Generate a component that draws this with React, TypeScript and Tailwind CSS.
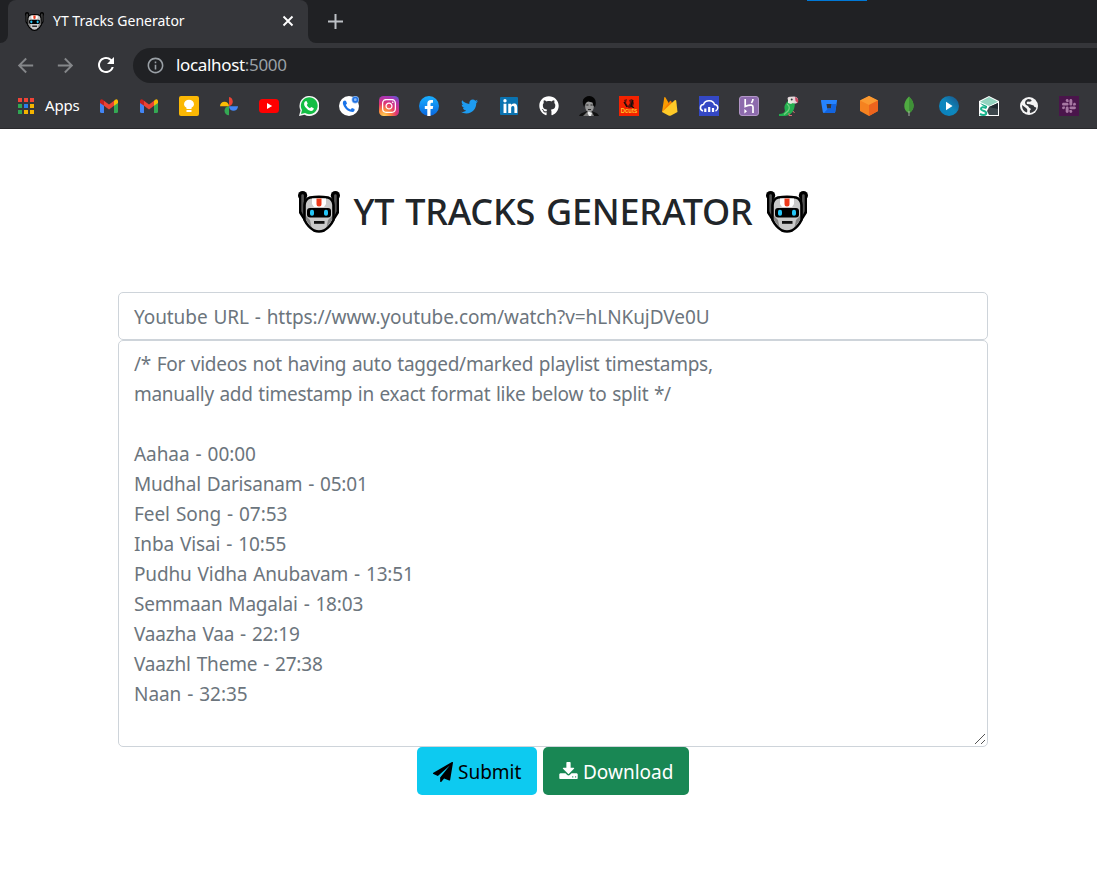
import type { ReactNode } from "react";
import { FaInstagram, FaTwitter, FaGithub, FaLinkedinIn, FaSlack } from "react-icons/fa";
import { MdArrowBack, MdArrowForward, MdRefresh, MdInfoOutline } from "react-icons/md";

function Robot({ className }: { className: string }) {
  return (
    <svg viewBox="0 0 42 42" className={className}>
      <path d="M4.200 4.600V21L8 27M37.800 4.600V21L34 27" stroke="#000" strokeWidth="6.400" strokeLinecap="round" fill="none" />
      <circle cx="4.600" cy="4.600" r="4.600" fill="#000" />
      <circle cx="37.400" cy="4.600" r="4.600" fill="#000" />
      <path d="M4.600 4.500V20L7 25M37.400 4.500V20L35 25" stroke="#555" strokeWidth="2.600" strokeLinecap="round" fill="none" />
      <path d="M12 6.500Q21 5 30 6.500Q35 8 35.500 14V29Q32 36 26 39.500Q21 41.500 16 39.500Q10 36 6.500 29V14Q7 8 12 6.500Z" fill="#c9c9c9" stroke="#000" strokeWidth="2.600" />
      <path d="M8 25L12 29L13.500 36.500L8 29ZM34 25L30 29L28.500 36.500L34 29Z" fill="#858585" />
      <path d="M14 7.500H28V13L26 16H16L14 13Z" fill="#fff" />
      <path d="M18.500 7.500H23.500V13Q23.500 15.500 21 15.500Q18.500 15.500 18.500 13Z" fill="#ee3a1b" />
      <rect x="9" y="17" width="24" height="9.500" rx="3" fill="#000" />
      <rect x="12" y="18.800" width="4" height="6" rx="1.800" fill="#25c6f7" />
      <rect x="26" y="18.800" width="4" height="6" rx="1.800" fill="#25c6f7" />
      <rect x="16" y="30" width="10.500" height="2.800" fill="#111" />
    </svg>
  );
}

function PaperPlane() {
  return (
    <svg viewBox="0 0 1792 1792" className="mr-[5px] size-5" fill="currentColor">
      <path d="M1764 11q33 24 27 64l-256 1536q-5 29-32 45-14 8-31 8-11 0-24-5l-453-185-242 295q-18 23-49 23-13 0-22-4-19-7-30.5-23.5t-11.5-36.5v-349l864-1059-1069 925-395-162q-37-14-40-55-2-40 32-59l1664-960q15-9 32-9 20 0 36 11z" />
    </svg>
  );
}

function DownloadTray() {
  return (
    <svg viewBox="64 0 1664 1536" className="mr-[5px] mb-[4px] h-[17px] w-[19px]" fill="currentColor">
      <path d="M1344 1344q0-26-19-45t-45-19-45 19-19 45 19 45 45 19 45-19 19-45zm256 0q0-26-19-45t-45-19-45 19-19 45 19 45 45 19 45-19 19-45zm128-224v320q0 40-28 68t-68 28h-1472q-40 0-68-28t-28-68v-320q0-40 28-68t68-28h465l135 136q58 56 136 56t136-56l136-136h464q40 0 68 28t28 68zm-325-569q17 41-14 70l-448 448q-18 19-45 19t-45-19l-448-448q-31-29-14-70 17-39 59-39h256v-448q0-26 19-45t45-19h256q26 0 45 19t19 45v448h256q42 0 59 39z" />
    </svg>
  );
}

function Icon({ children }: { children: ReactNode }) {
  return <svg viewBox="0 0 20 20" className="size-5">{children}</svg>;
}

function Gmail() {
  return (
    <Icon>
      <path d="M1 5V15.500Q1 17 2.500 17H5V8.500Z" fill="#4285f4" />
      <path d="M15 8.500V17H17.500Q19 17 19 15.500V5Z" fill="#34a853" />
      <path d="M5 4.800L10 8.600L15 4.800V9.800L10 13.600L5 9.800Z" fill="#ea4335" />
      <path d="M1 5Q1.500 2 4 3.800L5 4.800V9.800L1 7Z" fill="#c5221f" />
      <path d="M19 5Q18.500 2 16 3.800L15 4.800V9.800L19 7Z" fill="#fbbc04" />
    </Icon>
  );
}

const bookmarks: ReactNode[] = [
  <Gmail />,
  <Gmail />,
  <Icon>
    <rect width="20" height="20" rx="2" fill="#fbb804" />
    <path d="M7.500 13V11.700Q5 10.500 5 8.500A5 4.800 0 0 1 15 8.500Q15 10.500 12.500 11.700V13ZM7.500 14H12.500V16H7.500Z" fill="#fff" />
  </Icon>,
  <Icon>
    <path d="M10 1A4.700 4.700 0 0 1 10 10.200Z" fill="#ea4335" />
    <path d="M19 10.200A4.500 4.500 0 0 1 10 10.200Z" fill="#4285f4" />
    <path d="M10 19.200A4.500 4.500 0 0 1 10 10.200Z" fill="#34a853" />
    <path d="M1 10.200A4.500 4.500 0 0 1 10 10.200Z" fill="#fbbc04" />
  </Icon>,
  <Icon>
    <rect y="3" width="20" height="14" rx="3.500" fill="#f00" />
    <path d="M8 7L13.200 10L8 13Z" fill="#fff" />
  </Icon>,
  <Icon>
    <path d="M0 20L1.500 14.500A10 10 0 1 1 5.500 18.700Z" fill="#f5f5f5" />
    <path d="M2 18L3 14A8.400 8.400 0 1 1 6 17Z" fill="#13bd43" />
    <path d="M6 5.500Q7.500 4.300 8 6L8.700 7.800L7.700 9Q8.800 11.200 11 12.200L12.200 11L14.800 12.300Q14.500 15 12 15Q8.800 14.600 6.200 11Q4 7.700 6 5.500Z" fill="#fff" />
  </Icon>,
  <Icon>
    <circle cx="10" cy="10" r="10" fill="#fff" />
    <path d="M4.500 5Q6 4 7 5L8 7.500L6.800 9Q8 12 11.500 13.500L13 12L15.500 13Q16 15.500 13.500 16Q8 15.500 5 10.500Q3 7 4.500 5Z" fill="#1a73e8" />
    <circle cx="16.300" cy="3.700" r="3.700" fill="#8ebcf5" />
    <circle cx="16.300" cy="3.700" r="2.200" fill="none" stroke="#2272e2" strokeWidth="1.600" />
  </Icon>,
  <Icon>
    <defs>
      <radialGradient id="insta" cx=".25" cy="1" r="1.150">
        <stop offset="0" stopColor="#ffd35a" /><stop offset=".28" stopColor="#fb893c" /><stop offset=".55" stopColor="#e13572" /><stop offset=".85" stopColor="#a936b5" /><stop offset="1" stopColor="#6756cf" />
      </radialGradient>
    </defs>
    <rect width="20" height="20" rx="4.500" fill="url(#insta)" />
    <FaInstagram x="2" y="2" width="16" height="16" color="#fff" />
  </Icon>,
  <Icon>
    <defs><linearGradient id="fb" x2="0" y2="1"><stop stopColor="#19afff" /><stop offset="1" stopColor="#0866df" /></linearGradient></defs>
    <circle cx="10" cy="10" r="10" fill="url(#fb)" />
    <path d="M8.300 20V13H5.800V10H8.300V7.700Q8.300 4 12 4H14V6.700H12.700Q11.500 6.700 11.500 8V10H14.200L13.700 13H11.500V20Z" fill="#fff" />
  </Icon>,
  <FaTwitter className="size-[17px] text-[#1d9bf0]" />,
  <Icon>
    <rect x="1" y="1" width="18" height="18" rx="1" fill="#0a73b1" />
    <FaLinkedinIn x="3.300" y="3" width="13.500" height="13.500" color="#fff" />
  </Icon>,
  <FaGithub className="size-5 text-white" />,
  <Icon>
    <path d="M0 20Q1 17 6 16L10 14L15 16Q19 17 20 20Z" fill="#111" />
    <path d="M4 20L8 16H13L15 20Z" fill="#777" />
    <ellipse cx="10.500" cy="10.500" rx="4.300" ry="6" fill="#969696" />
    <path d="M5 11Q2 4 6 1.500Q11-1.500 15 2Q18 5 16 11L14.500 10L13.500 6.500L9 5.500L6.500 7Z" fill="#050505" />
    <path d="M7.300 9H9.500M11.500 9H13.700M9 13.500H12" stroke="#272727" />
    <path d="M9.500 15.500L8.500 17L10 20H12L13 17Z" fill="#eee" />
  </Icon>,
  <Icon>
    <rect width="20" height="20" fill="#f42200" />
    <path d="M5 4L8 3L7 7L9 10L11 7L10 4L13 3L15 7L14 11L10 12L7 10Z" fill="#65100a" />
    <path d="M5 6L8 11M14 4L12 10L15 12" stroke="#14100b" strokeWidth="1.300" fill="none" />
    <text x="1.800" y="16.600" textLength="16.400" lengthAdjust="spacingAndGlyphs" fontFamily="Liberation Sans" fontWeight="700" fontSize="7" fill="#ffc329">Dcuts</text>
  </Icon>,
  <Icon>
    <path d="M3 16L5.300 1.200Q6 .500 6.500 1.500L12 11L4 16Z" fill="#f99b00" />
    <path d="M3 16L11 5Q12 4 12.500 6L16 12Z" fill="#f57c00" />
    <path d="M3 16L16 4Q17 3.700 17.300 5L18.500 16L12 19.400Q10.800 20 9.500 19.400Z" fill="#ffca28" />
  </Icon>,
  <Icon>
    <rect width="20" height="20" fill="#3448c5" />
    <path d="M4 15Q1 14 1.500 11Q2 8.500 4.500 8.500Q6 4.500 10.500 4.800Q14.500 5 15.500 8.500Q19 9 18.800 12Q18.600 14 16.500 15" fill="none" stroke="#fff" strokeWidth="1.500" />
    <path d="M6.300 16V12.500M10.200 16V11M14 16V12" stroke="#fff" strokeWidth="2.200" />
  </Icon>,
  <Icon>
    <rect x=".5" y=".5" width="19" height="19" rx="2.500" fill="#8d6bad" stroke="#b295c7" />
    <path d="M6.200 3V10.500Q10 9 12.200 9.200Q14 9.500 14 11V17M14 3Q13.900 5 12.400 7" fill="none" stroke="#fff" strokeWidth="1.700" />
    <path d="M5.400 13L8 15.200L5.400 17.400Z" fill="#fff" />
  </Icon>,
  <Icon>
    <path d="M9 5Q4 9 6 15Q5 18 0 18V20H6Q13 19 15 13Q17 7 14 4Z" fill="#23af4f" />
    <path d="M9 4Q7.500 1 11 .700L15 .500Q20 1 19 6L17 7.500Q12 8 9 4Z" fill="#e5d3da" />
    <path d="M9 3L13 1L15 6L12 8L9 7Z" fill="#e6e7dd" />
    <path d="M16 1Q20 2 19 7L16.500 5Z" fill="#c9455f" />
    <circle cx="12.700" cy="3.500" r="1" fill="#34313a" />
    <path d="M8 8Q12 11 9 15L5 18.500" stroke="#72cd7d" strokeWidth="1.300" fill="none" />
    <path d="M10 17V19.500H13M14 15L15.500 17" stroke="#d66b70" fill="none" />
  </Icon>,
  <Icon>
    <path d="M2.200 4H17.800Q18.200 4 18 5L16.200 16Q16 17 15 17H5Q4 17 3.800 16L2 5Q2 4 2.200 4ZM7.500 8L8.200 12.500H12L12.700 8Z" fillRule="evenodd" fill="#2684ff" />
    <path d="M12.700 8H17.500L16.200 16Q16 17 15 17H5L9 12.500H12Z" fill="#1264df" />
  </Icon>,
  <Icon>
    <path d="M10 0L19 4.500V15L10 20L1 15V4.500Z" fill="#f58220" />
    <path d="M10 0L19 4.500L10 9L1 4.500Z" fill="#fa9a31" />
    <path d="M10 9L19 4.500V15L10 20Z" fill="#ed641d" />
  </Icon>,
  <Icon>
    <path d="M10 .500Q5 5 5.300 10.500Q5.500 14.500 9.500 17H10.500Q14.500 14 14.700 9.500Q14 4 10 .500Z" fill="#4faa41" />
    <path d="M10 .500V17H10.500Q14.500 14 14.700 9.500Q14 4 10 .500Z" fill="#3f9137" />
    <path d="M10 15V20" stroke="#a5aca2" />
  </Icon>,
  <Icon>
    <defs><linearGradient id="play" x1="0" y1="1" x2="1" y2="0"><stop stopColor="#087fbe" /><stop offset=".5" stopColor="#0e88bd" /><stop offset="1" stopColor="#1b5185" /></linearGradient></defs>
    <circle cx="10" cy="10" r="10" fill="url(#play)" />
    <path d="M7 5.700L13.500 10L7 14.300Z" fill="#fff" />
  </Icon>,
  <Icon>
    <path d="M10 0L20 5V20H0V5Z" fill="#fff" />
    <path d="M10 1L19 5.800L10 10L1 5.800Z" fill="#92d3bf" />
    <path d="M19 7V19H10L8 15L10 11Z" fill="#3d474c" />
    <path d="M10 11L19 7V13Z" fill="#202a30" />
    <path d="M1 7L8 10V12L3 9Z" fill="#16a986" />
    <path d="M7.500 12Q2 10 2 13Q2 14 5 15Q8 16 7 18Q5 20 1 18" stroke="#18b38c" strokeWidth="2" fill="none" />
  </Icon>,
  <Icon>
    <circle cx="10" cy="10" r="9" fill="#f4f4f4" />
    <path d="M9 3Q13 3 12.500 5Q11 6 9 5.500Q7 6 8 8Q11 8 13 9Q15 9 15.500 11Q18 11 17 13Q15.500 16 11 17Q10 14.500 12 13Q10 12 9 10Q6 9 6 7Q6 4 9 3ZM3 9L7 12Q9 13 8 16.500Q3 15 3 9Z" fill="#34363a" />
  </Icon>,
  <Icon>
    <rect width="20" height="20" fill="#4a154b" />
    <FaSlack x="2" y="2" width="16" height="16" color="#a778a3" />
  </Icon>,
];

const appColors = ["bg-[#f04437]", "bg-[#f04437]", "bg-[#f04437]", "bg-[#30a653]", "bg-[#2b7de9]", "bg-[#f4b400]", "bg-[#30a653]", "bg-[#f4b400]", "bg-[#f4b400]"];

const sentence = "tracking-[-0.26px] [word-spacing:1px]";
const track = "tracking-[-0.06px] [word-spacing:1.1px]";
const longTrack = "tracking-[-0.18px] [word-spacing:1.1px]";

const lines: { text: string; spacing: string }[] = [
  { text: "/* For videos not having auto tagged/marked playlist timestamps,", spacing: sentence },
  { text: "manually add timestamp in exact format like below to split */", spacing: "tracking-[-0.28px] [word-spacing:1px]" },
  { text: "", spacing: track },
  { text: "Aahaa - 00:00", spacing: track },
  { text: "Mudhal Darisanam - 05:01", spacing: longTrack },
  { text: "Feel Song - 07:53", spacing: track },
  { text: "Inba Visai - 10:55", spacing: "tracking-[-0.12px] [word-spacing:1.1px]" },
  { text: "Pudhu Vidha Anubavam - 13:51", spacing: "tracking-[-0.14px] [word-spacing:1.1px]" },
  { text: "Semmaan Magalai - 18:03", spacing: longTrack },
  { text: "Vaazha Vaa - 22:19", spacing: longTrack },
  { text: "Vaazhl Theme - 27:38", spacing: longTrack },
  { text: "Naan - 32:35", spacing: track },
];

export default function App() {
  return (
    <div className="h-[877px] w-[1097px] overflow-hidden bg-white font-['Noto_Sans',sans-serif]">
      <header className="bg-[#35363a] text-white">
        <div className="relative flex h-[43px] bg-[#202124]">
          <div className="flex w-2 bg-[#35363a]"><div className="w-2 rounded-br-lg bg-[#202124]" /></div>
          <div className="flex w-[300px] items-center rounded-t-lg bg-[#35363a] pr-[14px] pb-px pl-[17px]">
            <Robot className="size-[19px]" />
            <span className="mb-px ml-[9px] text-[14px] whitespace-nowrap">YT Tracks Generator</span>
            <svg viewBox="0 0 12 12" className="ml-auto size-3"><path d="M1.500 1.500L10.500 10.500M10.500 1.500L1.500 10.500" stroke="#fff" strokeWidth="1.900" /></svg>
          </div>
          <div className="flex flex-1 bg-[#35363a]">
            <div className="flex flex-1 items-center rounded-bl-lg bg-[#202124] pb-px pl-5"><svg viewBox="0 0 15 15" className="size-[15px]"><path d="M7.500 0V15M0 7.500H15" stroke="#bdc1c6" strokeWidth="2" /></svg></div>
          </div>
          <div className="absolute top-0 left-[807px] h-px w-[60px] bg-[#0078d7]" />
        </div>
        <div className="flex h-[45px] items-center pb-px pl-[14px]">
          <MdArrowBack className="size-[23px] text-[#85878a]" />
          <MdArrowForward className="ml-[17px] size-[23px] text-[#85878a]" />
          <MdRefresh className="ml-[17px] size-[24px]" />
          <div className="ml-[15px] flex h-[35px] flex-1 items-center rounded-l-full bg-[#202124] pl-[13px]">
            <MdInfoOutline className="size-[19px] text-[#9aa0a6]" />
            <span className="ml-[11px] text-[17px] tracking-[-0.33px]">localhost<span className="text-[#9aa0a6]">:5000</span></span>
          </div>
        </div>
        <div className="flex h-[41px] items-center border-b border-[#29292c] pb-[4px] pl-[18px]">
          <div className="grid grid-cols-3 gap-[2px]">
            {appColors.map((color, i) => <div key={i} className={"size-[4px] " + color} />)}
          </div>
          <span className="mb-px ml-[11px] w-[54px] text-[15px] tracking-[-0.2px]">Apps</span>
          <div className="flex gap-5">
            {bookmarks.map((icon, i) => <div key={i} className="flex size-5 shrink-0 items-center justify-center">{icon}</div>)}
          </div>
        </div>
      </header>
      <main className="ml-[118px] w-[870px]">
        <h1 className="flex h-[163px] items-center justify-center pt-[2px] text-[#212529]">
          <Robot className="size-[42px]" />
          <span className="mx-[13px] flex w-[400px] justify-center text-[36px] font-medium tracking-[-0.22px] whitespace-nowrap [word-spacing:1.800px]">YT TRACKS GENERATOR</span>
          <Robot className="size-[42px]" />
        </h1>
        <div className="flex h-12 items-center rounded-[5px] border border-[#ced4da] px-[15px] pt-[2px] text-[19px] tracking-[-0.07px] text-[#6c757d] [word-spacing:1px]">
          Youtube URL - https://www.youtube.com/watch?v=hLNKujDVe0U
        </div>
        <div className="relative h-[407px] rounded-[5px] border border-[#ced4da] px-[15px] pt-[8px] text-[19px] leading-[30px] text-[#6c757d]">
          {lines.map((line, i) => <div key={i} className={"h-[30px] whitespace-nowrap " + line.spacing}>{line.text}</div>)}
          <svg viewBox="0 0 12 12" className="absolute right-[1px] bottom-[1px] size-3"><path d="M1 11L11 1M7 11L11 7" stroke="#555" /></svg>
        </div>
        <div className="flex justify-center gap-1.5">
          <button className="flex h-12 w-[120px] items-center rounded-[5px] bg-[#0dcaf0] pt-[2px] pl-4 text-[19px] text-black"><PaperPlane />Submit</button>
          <button className="flex h-12 w-[146px] items-center rounded-[5px] bg-[#198754] pt-[2px] pl-4 text-[19px] text-white"><DownloadTray />Download</button>
        </div>
      </main>
    </div>
  );
}
